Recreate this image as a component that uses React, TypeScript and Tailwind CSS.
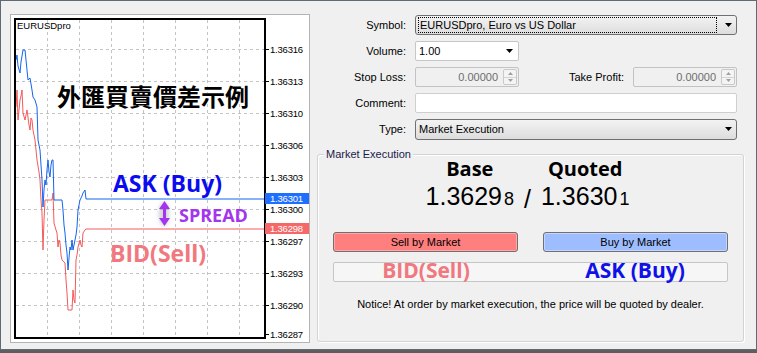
import React from 'react';

const gridY = [49, 81, 113, 145, 177, 209, 241, 273, 305];
const gridX = [47, 79, 111, 143, 175, 207, 239];

const axisLabels = [
    { y: 49, v: '1.36316' },
    { y: 81, v: '1.36313' },
    { y: 113, v: '1.36310' },
    { y: 145, v: '1.36306' },
    { y: 177, v: '1.36303' },
    { y: 209, v: '1.36300' },
    { y: 241, v: '1.36297' },
    { y: 273, v: '1.36293' },
    { y: 305, v: '1.36290' },
    { y: 334, v: '1.36287' },
];

const askLine =
    '16,60 17,55 18,66 20,73 21,62 23,50 25,50 26,60 28,80 30,78 32,90 33,97 35,100 37,107 38,140 40,150 41,165 42,180 43,207 44,190 45,180 46,185 47,170 48,160 49,172 50,177 51,165 52,160 53,160 54,200 62,200 63,210 64,225 65,233 66,245 67,253 68,270 69,258 70,247 71,250 72,240 73,250 74,245 75,240 76,235 77,227 78,210 80,200 82,196 83,193 85,190 86,199 265,199';

const bidLine =
    '16,107 17,90 18,120 19,110 20,100 21,96 22,90 23,113 25,120 26,115 27,110 29,125 30,130 31,118 32,120 33,130 35,140 36,150 37,160 39,172 40,180 41,200 42,213 43,250 44,220 45,200 52,200 53,193 54,223 56,230 57,233 58,247 59,240 60,243 61,255 62,260 64,262 65,263 66,280 67,293 68,310 72,310 73,290 74,300 75,303 76,260 77,255 78,247 80,240 81,245 82,247 83,233 85,230 86,229 265,229';

const DropArrow = () => (
    <svg width="7" height="4" viewBox="0 0 7 4">
        <polygon points="0,0 7,0 3.5,4" fill="#000" />
    </svg>
);

const Spinner = () => (
    <div className="flex flex-col w-[14px] h-[16px] border border-[#c9c9c9] rounded-[2px] bg-[#f4f4f4]">
        <div className="flex-1 flex items-center justify-center border-b border-[#d4d4d4]">
            <svg width="5" height="3" viewBox="0 0 5 3"><polygon points="0,3 5,3 2.5,0" fill="#a0a0a0" /></svg>
        </div>
        <div className="flex-1 flex items-center justify-center">
            <svg width="5" height="3" viewBox="0 0 5 3"><polygon points="0,0 5,0 2.5,3" fill="#a0a0a0" /></svg>
        </div>
    </div>
);

const PriceInput = () => (
    <div className="w-[104px] h-[20px] border border-[#c3c3c3] rounded-[2px] bg-[#f0f0f0] flex items-center pl-[4px] pr-[1px]">
        <span className="flex-1 text-right pr-[5px] text-[#6d6d6d]">0.00000</span>
        <Spinner />
    </div>
);

const Row = ({ label, children }: { label: string; children: React.ReactNode }) => (
    <div className="flex items-center h-[20px]">
        <div className="w-[96px] text-right">{label}</div>
        <div className="ml-[9px] flex items-center">{children}</div>
    </div>
);

const Chart = () => (
    <div className="relative w-[300px] h-[329px] border border-[#b4b4b4] bg-white shrink-0">
        <svg className="absolute inset-0" width="298" height="327" viewBox="11 15 298 327">
            {gridY.map((y) => (
                <line key={'h' + y} x1="16" x2="264" y1={y + 0.5} y2={y + 0.5} stroke="#c4c4c4" strokeDasharray="3 3" />
            ))}
            {gridX.map((x) => (
                <line key={'v' + x} x1={x + 0.5} x2={x + 0.5} y1="20" y2="336" stroke="#c4c4c4" strokeDasharray="3 3" />
            ))}
            {axisLabels.map((l) => (
                <line key={'t' + l.y} x1="266" x2="269" y1={l.y + 0.5} y2={l.y + 0.5} stroke="#000" />
            ))}
            <ellipse cx="164" cy="214" rx="5" ry="12" fill="#9a9a9a" opacity="0.45" style={{ filter: 'blur(2px)' }} />
            <polyline points={bidLine} fill="none" stroke="#f55a5a" strokeWidth="1" />
            <polyline points={askLine} fill="none" stroke="#1464f0" strokeWidth="1" />
            <rect x="15" y="19" width="250" height="319" fill="none" stroke="#000" strokeWidth="2" />
            <line x1="164.5" x2="164.5" y1="205" y2="222" stroke="#a335ee" strokeWidth="3" />
            <polygon points="159,209 164.5,201 170,209" fill="#a335ee" />
            <polygon points="159,218 164.5,226 170,218" fill="#a335ee" />
        </svg>

        <div className="absolute left-[6px] top-[5px] text-[9.5px] leading-[12px] text-black">EURUSDpro</div>

        {axisLabels.map((l) => (
            <div
                key={l.v}
                className="absolute left-[259px] text-[9.5px] leading-[9px] tracking-[-0.2px] text-black"
                style={{ top: l.y - 4.5 - 15 }}
            >
                {l.v}
            </div>
        ))}
        <div className="absolute left-[254px] top-[178px] w-[44px] h-[11px] bg-[#1e6fff] text-white text-[9.5px] leading-[11px] tracking-[-0.2px] pl-[5px]">
            1.36301
        </div>
        <div className="absolute left-[254px] top-[208px] w-[44px] h-[11px] bg-[#f66868] text-white text-[9.5px] leading-[11px] tracking-[-0.2px] pl-[5px]">
            1.36298
        </div>

        <div className="absolute left-[46px] top-[69px] font-['Noto_Sans_CJK_TC',sans-serif] text-[24px] leading-[24px] font-bold text-black [text-shadow:0_0_2px_#fff]">
            外匯買賣價差示例
        </div>
        <div className="absolute left-[102px] top-[157px] font-['Open_Sans',sans-serif] text-[23px] leading-[23px] font-bold text-[#0b0bf0]">
            ASK (Buy)
        </div>
        <div className="absolute left-[168px] top-[191px] font-['Open_Sans',sans-serif] text-[18px] leading-[18px] font-bold text-[#a335ee]">
            SPREAD
        </div>
        <div className="absolute left-[99px] top-[227px] font-['Open_Sans',sans-serif] text-[23px] leading-[23px] font-bold text-[#f0787e]">
            BID(Sell)
        </div>
    </div>
);

export default function App() {
    return (
        <div className="w-[757px] h-[353px] bg-[#5e5e5e] font-['Liberation_Sans',Arial,sans-serif] text-[11px] text-black">
            <div className="h-[350px] border border-[#5f6a74] bg-[#f0f0f0] flex pl-[9px] pt-[13px]">
                <Chart />

                <div className="flex flex-col mt-[1px]">
                    <div className="flex flex-col gap-[6px]">
                        <Row label="Symbol:">
                            <div className="w-[322px] h-[20px] rounded-[3px] border border-[#707070] bg-linear-to-b from-[#f3f3f3] to-[#dddddd] flex items-center pl-[2px] pr-[4px]">
                                <div className="flex-1 h-[16px] border border-dotted border-black flex items-center pl-[1px]">
                                    EURUSDpro, Euro vs US Dollar
                                </div>
                                <div className="w-[15px] flex justify-end">
                                    <DropArrow />
                                </div>
                            </div>
                        </Row>
                        <Row label="Volume:">
                            <div className="w-[104px] h-[20px] rounded-[2px] border border-[#c6c6c6] bg-white flex items-center pl-[3px] pr-[5px]">
                                <span className="flex-1">1.00</span>
                                <DropArrow />
                            </div>
                        </Row>
                        <Row label="Stop Loss:">
                            <PriceInput />
                            <div className="w-[105px] text-right">Take Profit:</div>
                            <div className="ml-[9px]">
                                <PriceInput />
                            </div>
                        </Row>
                        <Row label="Comment:">
                            <div className="w-[322px] h-[20px] rounded-[2px] border border-[#cfcfcf] bg-white" />
                        </Row>
                        <Row label="Type:">
                            <div className="w-[322px] h-[21px] rounded-[3px] border border-[#707070] bg-linear-to-b from-[#f3f3f3] to-[#dddddd] flex items-center pl-[3px] pr-[4px]">
                                <span className="flex-1">Market Execution</span>
                                <DropArrow />
                            </div>
                        </Row>
                    </div>

                    <div className="relative ml-[7px] mt-[15px] w-[427px] h-[188px] rounded-[3px] border border-[#d3d3d3] shadow-[inset_1px_1px_0_#fff,1px_1px_0_#fff] px-[15px] pt-[4px]">
                        <span className="absolute left-[6px] top-[-8px] bg-[#f0f0f0] px-[2px] leading-[14px] text-[#1b1b4a]">
                            Market Execution
                        </span>

                        <div className="flex justify-center items-end pr-[6px]">
                            <div className="flex flex-col items-center">
                                <div className="font-['Open_Sans',sans-serif] font-bold text-[20px] leading-[20px]">Base</div>
                                <div className="mt-[4px] text-[25px] leading-[26px]">
                                    1.3629<span className="text-[18px] ml-[2px]">8</span>
                                </div>
                            </div>
                            <div className="text-[25px] leading-[26px] px-[10px]">/</div>
                            <div className="flex flex-col items-center">
                                <div className="font-['Open_Sans',sans-serif] font-bold text-[20px] leading-[20px]">Quoted</div>
                                <div className="mt-[4px] text-[25px] leading-[26px]">
                                    1.3630<span className="text-[18px] ml-[2px]">1</span>
                                </div>
                            </div>
                        </div>

                        <div className="grid grid-cols-2 gap-[25px] mt-[20px]">
                            <button className="h-[20px] rounded-[3px] border border-[#707070] bg-[#ff7f7f] shadow-[inset_0_0_0_1px_#ffa8a8] leading-[18px]">
                                Sell by Market
                            </button>
                            <button className="h-[20px] rounded-[3px] border border-[#707070] bg-[#9ebdff] shadow-[inset_0_0_0_1px_#c4d6ff] leading-[18px]">
                                Buy by Market
                            </button>
                        </div>

                        <div className="mt-[10px] h-[20px] rounded-[2px] border border-[#c6c6c6] bg-[#f6f6f6] grid grid-cols-2 gap-[25px] font-['Open_Sans',sans-serif] font-bold text-[21px] leading-[15px]">
                            <div className="text-center text-[#f0787e]">BID(Sell)</div>
                            <div className="text-center text-[#1010e8]">ASK (Buy)</div>
                        </div>

                        <div className="mt-[15px] text-center leading-[14px]">
                            Notice! At order by market execution, the price will be quoted by dealer.
                        </div>
                    </div>
                </div>
            </div>
        </div>
    );
}
